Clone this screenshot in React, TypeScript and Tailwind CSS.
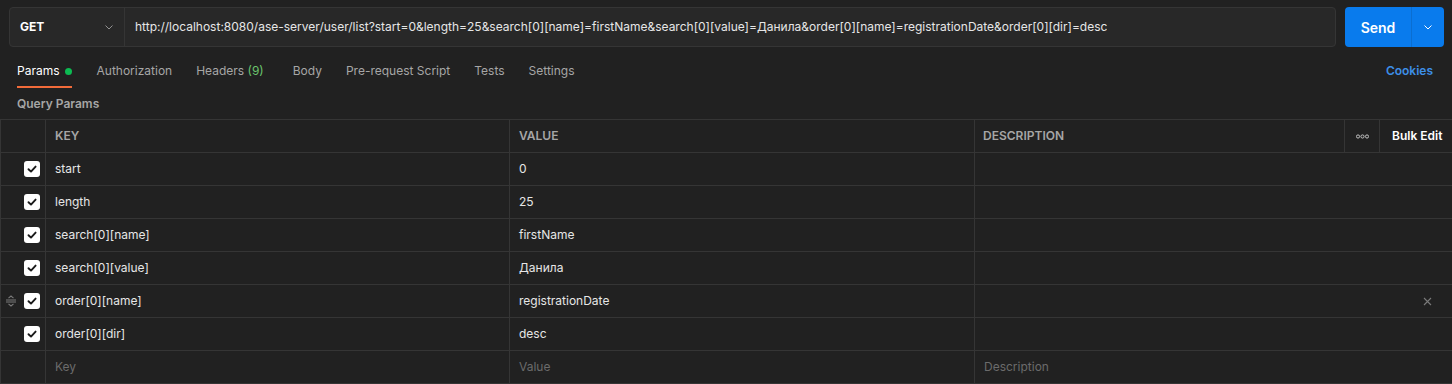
import React from "react";

const rows = [
  { k: "start", v: "0" },
  { k: "length", v: "25" },
  { k: "search[0][name]", v: "firstName" },
  { k: "search[0][value]", v: "Данила" },
  { k: "order[0][name]", v: "registrationDate", hover: true },
  { k: "order[0][dir]", v: "desc" },
];

function Chevron() {
  return (
    <svg width="12" height="12" viewBox="0 0 12 12" fill="none">
      <path d="M2.5 4.5 L6 8 L9.5 4.5" stroke="currentColor" strokeWidth="1" />
    </svg>
  );
}

function Checkbox() {
  return (
    <div className="w-4 h-4 rounded-[3px] bg-white flex items-center justify-center">
      <svg width="12" height="12" viewBox="0 0 12 12" fill="none">
        <path d="M2.5 6.2 L5 8.6 L9.6 3.6" stroke="#1a1a1a" strokeWidth="1.9" strokeLinecap="round" strokeLinejoin="round" />
      </svg>
    </div>
  );
}

function DragHandle() {
  return (
    <svg width="12" height="12" viewBox="0 0 12 12" fill="none" className="text-[#7a7a7a]">
      <path d="M3.5 3.2 L6 1 L8.5 3.2" stroke="currentColor" strokeWidth="1.1" />
      <path d="M1 5 H11 M1 7 H11" stroke="currentColor" strokeWidth="1.1" />
      <path d="M3.5 8.8 L6 11 L8.5 8.8" stroke="currentColor" strokeWidth="1.1" />
    </svg>
  );
}

export default function App() {
  return (
    <div
      className="w-[1452px] h-[384px] bg-[#212121] text-[#ffffff] overflow-hidden"
      style={{ fontFamily: "Inter, 'Noto Sans', sans-serif" }}
    >
      {/* URL bar */}
      <div className="flex items-center pt-[7px] pl-[9px] pr-[8px] gap-[9px]">
        <div className="flex flex-1 h-[40px] rounded-[4px] border border-[#353535] bg-[#282828]">
          <div className="w-[115px] flex items-center justify-between pl-[10px] pr-[9px] border-r border-[#353535] shrink-0">
            <span className="text-[12px] font-bold text-white">GET</span>
            <span className="text-[#909090]"><Chevron /></span>
          </div>
          <div className="flex items-center pl-[10px] text-[12px] text-[#e6e6e6] whitespace-nowrap overflow-hidden">
            http://localhost:8080/ase-server/user/list?start=0&amp;length=25&amp;search[0][name]=firstName&amp;search[0][value]=Данила&amp;order[0][name]=registrationDate&amp;order[0][dir]=desc
          </div>
        </div>
        <div className="flex h-[40px] w-[99px] rounded-[4px] bg-[#097bed] overflow-hidden shrink-0">
          <div className="w-[67px] flex items-center justify-center text-[14px] font-semibold text-white border-r border-[#0a6ed1]">
            Send
          </div>
          <div className="flex-1 flex items-center justify-center text-white">
            <Chevron />
          </div>
        </div>
      </div>

      {/* Tabs */}
      <div className="flex items-start justify-between pl-[17px] pr-[19px] mt-[16px] h-[25px]">
        <div className="flex gap-[24px] text-[12px] text-[#a6a6a6]">
          <div className="flex flex-col mr-[1px]">
            <div className="flex items-center gap-[5px] text-white leading-[16px]">
              Params <span className="w-[7px] h-[7px] rounded-full bg-[#0cbb52]" />
            </div>
            <div className="h-[2px] bg-[#f26b3a] mt-[7px]" />
          </div>
          <div className="leading-[16px]">Authorization</div>
          <div className="leading-[16px]">
            Headers <span className="text-[#6bc46d]">(9)</span>
          </div>
          <div className="leading-[16px] ml-[5px]">Body</div>
          <div className="leading-[16px]">Pre-request Script</div>
          <div className="leading-[16px]">Tests</div>
          <div className="leading-[16px]">Settings</div>
        </div>
        <div className="text-[12px] font-semibold text-[#3d8fe8] leading-[16px]">Cookies</div>
      </div>

      {/* Query params label */}
      <div className="pl-[17px] mt-[8px] h-[23px] text-[12px] font-semibold text-[#a6a6a6] leading-[16px]">
        Query Params
      </div>

      {/* Table */}
      <div className="border-t border-l border-[#353535]">
        {/* Header */}
        <div className="flex h-[33px] border-b border-[#353535] text-[12px] font-semibold text-[#a6a6a6]">
          <div className="w-[45px] border-r border-[#353535] shrink-0" />
          <div className="w-[464px] border-r border-[#353535] shrink-0 flex items-center pl-[9px]">KEY</div>
          <div className="w-[465px] border-r border-[#353535] shrink-0 flex items-center pl-[9px]">VALUE</div>
          <div className="flex-1 border-r border-[#353535] flex items-center pl-[8px]">DESCRIPTION</div>
          <div className="w-[35px] border-r border-[#353535] shrink-0 flex items-center justify-center text-[#d0d0d0]">
            <svg width="13" height="5" viewBox="0 0 13 5" fill="none">
              <circle cx="2" cy="2.5" r="1.6" stroke="currentColor" strokeWidth="0.9" />
              <circle cx="6.5" cy="2.5" r="1.6" stroke="currentColor" strokeWidth="0.9" />
              <circle cx="11" cy="2.5" r="1.6" stroke="currentColor" strokeWidth="0.9" />
            </svg>
          </div>
          <div className="w-[72px] shrink-0 flex items-center pl-[12px] text-white">Bulk Edit</div>
        </div>

        {rows.map((r) => (
          <div key={r.k} className="flex h-[33px] border-b border-[#353535] text-[12px] text-[#e6e6e6]">
            <div className="w-[45px] border-r border-[#353535] shrink-0 flex items-center pl-[4px]">
              <div className="w-[19px] flex items-center">{r.hover ? <DragHandle /> : null}</div>
              <Checkbox />
            </div>
            <div className="w-[464px] border-r border-[#353535] shrink-0 flex items-center pl-[9px]">{r.k}</div>
            <div className="w-[465px] border-r border-[#353535] shrink-0 flex items-center pl-[9px]">{r.v}</div>
            <div className="flex-1 flex items-center justify-end pr-[20px]">
              {r.hover ? (
                <svg width="9" height="9" viewBox="0 0 9 9" fill="none">
                  <path d="M1 1 L8 8 M8 1 L1 8" stroke="#7a7a7a" strokeWidth="1.1" />
                </svg>
              ) : null}
            </div>
          </div>
        ))}

        <div className="flex h-[33px] border-b border-[#353535] text-[12px] text-[#6b6b6b]">
          <div className="w-[45px] border-r border-[#353535] shrink-0" />
          <div className="w-[464px] border-r border-[#353535] shrink-0 flex items-center pl-[9px]">Key</div>
          <div className="w-[465px] border-r border-[#353535] shrink-0 flex items-center pl-[9px]">Value</div>
          <div className="flex-1 flex items-center pl-[9px]">Description</div>
        </div>
      </div>
    </div>
  );
}
